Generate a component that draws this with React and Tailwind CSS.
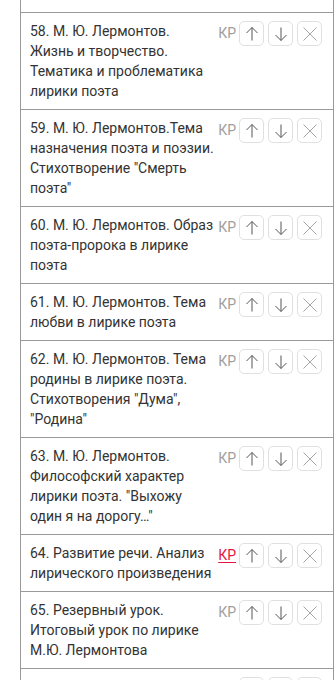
import React from "react";

const lessons = [
  { id: 58, title: "58. М. Ю. Лермонтов. Жизнь и творчество. Тематика и проблематика лирики поэта" },
  { id: 59, title: "59. М. Ю. Лермонтов.Тема назначения поэта и поэзии. Стихотворение \"Смерть поэта\"" },
  { id: 60, title: "60. М. Ю. Лермонтов. Образ поэта-пророка в лирике поэта" },
  { id: 61, title: "61. М. Ю. Лермонтов. Тема любви в лирике поэта" },
  { id: 62, title: "62. М. Ю. Лермонтов. Тема родины в лирике поэта. Стихотворения \"Дума\", \"Родина\"" },
  { id: 63, title: "63. М. Ю. Лермонтов. Философский характер лирики поэта. \"Выхожу один я на дорогу…\"" },
  { id: 64, title: "64. Развитие речи. Анализ лирического произведения", control: true },
  { id: 65, title: "65. Резервный урок. Итоговый урок по лирике М.Ю. Лермонтова" },
  { id: 66, title: "66. Н. В. Гоголь. Жизнь и творчество" },
];

const ArrowUp = () => (
  <svg width="16" height="16" viewBox="0 0 16 16" fill="none" stroke="#555" strokeWidth="1">
    <path d="M8 1.5v13M2.5 7L8 1.5 13.5 7" />
  </svg>
);

const ArrowDown = () => (
  <svg width="16" height="16" viewBox="0 0 16 16" fill="none" stroke="#555" strokeWidth="1">
    <path d="M8 1.5v13M2.5 9L8 14.5 13.5 9" />
  </svg>
);

const Cross = () => (
  <svg width="16" height="16" viewBox="0 0 16 16" fill="none" stroke="#a6a6a6" strokeWidth="1">
    <path d="M1.5 1.5l13 13M14.5 1.5l-13 13" />
  </svg>
);

const IconButton = ({ children }) => (
  <button className="w-[25px] h-[25px] flex items-center justify-center border border-[#e0e0e0] rounded-[5px] bg-white">
    {children}
  </button>
);

const LessonRow = ({ lesson }) => (
  <div className="flex items-start border-t border-[#9a9a9a] pl-[9px] pr-[11px] py-2">
    <p className="flex-1 pr-[3px] text-[14px] leading-5 text-[#333]">{lesson.title}</p>
    <div className="flex items-center">
      <span
        className={`text-[14px] leading-[25px] mr-[3px] ${
          lesson.control ? "text-[#e3173e] underline underline-offset-2" : "text-[#9e9e9e]"
        }`}
      >
        КР
      </span>
      <div className="flex gap-1">
        <IconButton>
          <ArrowUp />
        </IconButton>
        <IconButton>
          <ArrowDown />
        </IconButton>
        <IconButton>
          <Cross />
        </IconButton>
      </div>
    </div>
  </div>
);

export default function App() {
  return (
    <div className="bg-white h-[680px] overflow-hidden" style={{ fontFamily: "Roboto, 'Noto Sans', sans-serif" }}>
      <div className="ml-5 w-[314px] border-x border-[#9a9a9a]">
        <div className="h-3" />
        {lessons.map((lesson) => (
          <LessonRow key={lesson.id} lesson={lesson} />
        ))}
      </div>
    </div>
  );
}
